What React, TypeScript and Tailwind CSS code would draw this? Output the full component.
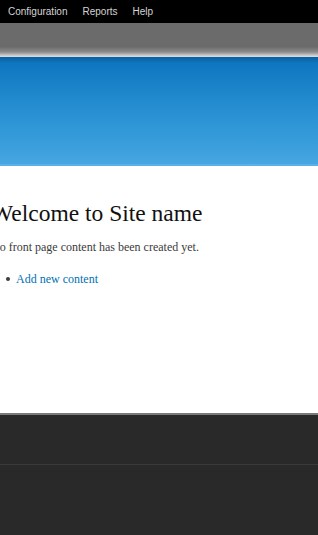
export default function App() {
  return (
    <div className="w-[318px] h-[535px] overflow-hidden bg-[#292929]">
      {/* Toolbar */}
      <div className="h-[23px] bg-black flex items-center gap-[15px] pl-[8px] font-['Liberation_Sans',sans-serif] text-[10px] text-[#d4d4d4]">
        <span>Configuration</span>
        <span>Reports</span>
        <span>Help</span>
      </div>

      {/* Header bar */}
      <div className="h-[34px] bg-[linear-gradient(to_bottom,#6b6b6b_0%,#6b6b6b_70%,#8a8a8a_85%,#c8c8c8_95%,#e0e0e0_100%)]" />

      {/* Featured blue band */}
      <div className="h-[109px] bg-[linear-gradient(to_bottom,#0a5fa0_0%,#0e77c0_6%,#2a92d4_55%,#45a6e1_100%)] border-b-2 border-[#55b2ea]" />

      {/* Main */}
      <main className="bg-white h-[247px] pt-[33px] font-['Liberation_Serif',serif] text-[#3b3b3b]">
        <div className="-ml-[9px]">
          <h1 className="text-[23.5px] leading-[28px] text-[#111]">Welcome to Site name</h1>
          <p className="mt-[11px] text-[12px] leading-[18px]">No front page content has been created yet.</p>
        </div>
        <ul className="mt-[14px] pl-[6px]">
          <li className="flex items-center gap-[6px] text-[12px] leading-[18px] text-[#0071b3]">
            <span className="w-[4px] h-[4px] rounded-full bg-[#3b3b3b]" />
            <span>Add new content</span>
          </li>
        </ul>
      </main>

      {/* Footer */}
      <footer className="border-t-2 border-[#7a7a7a]">
        <div className="h-[50px] bg-[#292929] border-b border-[#3a3a3a]" />
        <div className="h-[72px] bg-[#292929]" />
      </footer>
    </div>
  );
}
